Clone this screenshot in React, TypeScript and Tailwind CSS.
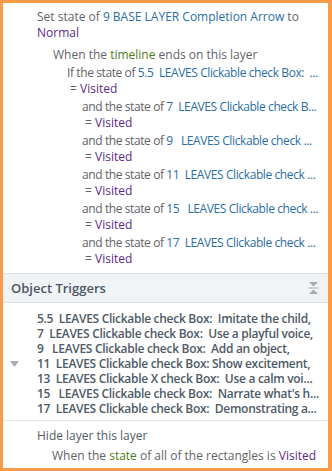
const GRAY = 'text-[#5f6368]'
const BLUE = 'text-[#2a6ea6]'
const PURPLE = 'text-[#5b2a88]'
const GREEN = 'text-[#4f7a16]'

const CONDITIONS = [
  { lead: 'If the state of ', obj: '5.5  LEAVES Clickable check Box:  ...', indent: 'pl-[30px]' },
  { lead: 'and the state of ', obj: '7  LEAVES Clickable check B...', indent: 'pl-[45px]' },
  { lead: 'and the state of ', obj: '9   LEAVES Clickable check ...', indent: 'pl-[45px]' },
  { lead: 'and the state of ', obj: '11  LEAVES Clickable check ...', indent: 'pl-[45px]' },
  { lead: 'and the state of ', obj: '15   LEAVES Clickable check ...', indent: 'pl-[45px]' },
  { lead: 'and the state of ', obj: '17  LEAVES Clickable check ...', indent: 'pl-[45px]' },
]

const OBJECT_TRIGGERS = [
  '5.5  LEAVES Clickable check Box:  Imitate the child,',
  '7  LEAVES Clickable check Box:  Use a playful voice,',
  '9   LEAVES Clickable check Box:  Add an object,',
  '11  LEAVES Clickable check Box: Show excitement,',
  '13  LEAVES Clickable X check Box:  Use a calm voi...',
  "15   LEAVES Clickable check Box:  Narrate what's h...",
  '17  LEAVES Clickable check Box:  Demonstrating a...',
]

function CollapseIcon() {
  return (
    <svg width="11" height="14" viewBox="0 0 11 14" className="text-[#a3abb4]">
      <path d="M1 1h9L5.5 5.5z" fill="currentColor" />
      <rect x="0.5" y="6.5" width="10" height="1" fill="currentColor" />
      <path d="M1 13h9L5.5 8.5z" fill="currentColor" />
    </svg>
  )
}

export default function App() {
  return (
    <div
      className="w-[332px] h-[471px] bg-white border-[3px] border-r-4 border-[#f89b48] flex flex-col overflow-hidden text-[12px] leading-[16px]"
      style={{ fontFamily: '"Segoe UI", "Open Sans", sans-serif' }}
    >
      <div className="pt-[6px] pl-[34px] whitespace-pre">
        <div className={GRAY}>
          Set state of <span className={BLUE}>9 BASE LAYER Completion Arrow</span> to
        </div>
        <div className={PURPLE}>Normal</div>

        <div className="mt-[6px] pl-[16px] overflow-hidden">
          <div className={GRAY}>
            When the <span className={GREEN}>timeline</span> ends on this layer
          </div>
        </div>

        {CONDITIONS.map((c, i) => (
          <div key={i} className={`mt-[2px] ${c.indent} overflow-hidden`}>
            <div className={`${GRAY} whitespace-pre overflow-hidden tracking-[-0.4px]`}>
              {c.lead}
              <span className={BLUE}>{c.obj}</span>
            </div>
            <div className={`${GRAY} pl-[3px]`}>
              = <span className={PURPLE}>Visited</span>
            </div>
          </div>
        ))}
      </div>

      <div className="mt-[6px] h-[30px] shrink-0 bg-[#f1f4f7] border-y border-[#dde2e7] flex items-center justify-between pl-[8px] pr-[9px]">
        <span className="text-[13px] text-[#4b5563] font-semibold">Object Triggers</span>
        <CollapseIcon />
      </div>

      <div className="flex items-center pt-[8px] pb-[4px] border-b border-[#e4e7eb]">
        <div className="w-[34px] shrink-0 pl-[7px]">
          <svg width="9" height="6" viewBox="0 0 9 6">
            <path d="M0 0h9L4.5 6z" fill="#a7aeb6" />
          </svg>
        </div>
        <div className="flex flex-col leading-[15px] font-semibold text-[#4e5a66] tracking-[-0.3px]">
          {OBJECT_TRIGGERS.map((t) => (
            <div key={t} className="whitespace-pre overflow-hidden">{t}</div>
          ))}
        </div>
      </div>

      <div className="pl-[34px] pt-[7px] whitespace-pre">
        <div className="text-[#4f5b66]">Hide layer this layer</div>
        <div className={`${GRAY} pl-[15px] mt-[4px]`}>
          When the <span className={GREEN}>state</span> of all of the rectangles is <span className={PURPLE}>Visited</span>
        </div>
      </div>
    </div>
  )
}
